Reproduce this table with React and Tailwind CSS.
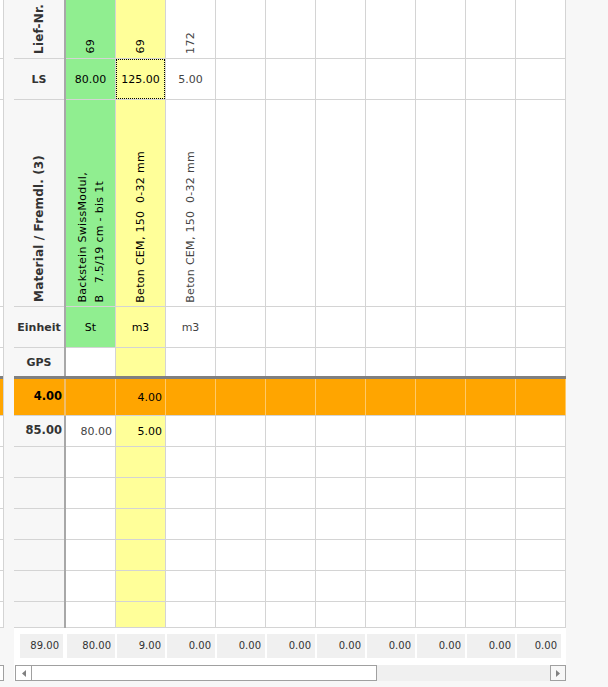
import React from "react";

const HEIGHTS = [
  "h-[59px]",
  "h-[41px]",
  "h-[207px]",
  "h-[41px]",
  "h-[28px]",
  "h-[40px]",
  "h-[31px]",
  "h-[31px]",
  "h-[31px]",
  "h-[31px]",
  "h-[31px]",
  "h-[31px]",
  "h-[26px]",
];

const GREEN = "bg-[#90ee90]";
const YELLOW = "bg-[#ffff99]";
const WHITE = "bg-white";
const ORANGE = "bg-[#ffa500]";

function Vert({ children, cls = "" }) {
  return (
    <span className={`[writing-mode:vertical-rl] rotate-180 whitespace-pre ${cls}`}>
      {children}
    </span>
  );
}

function DCell({ bg = WHITE, children, cls = "", orange = false }) {
  return (
    <div
      className={`relative w-[50px] shrink-0 border-r border-b ${
        orange ? "border-r-[#ffc966] border-b-[#d4d4d4]" : "border-[#d4d4d4]"
      } ${bg} ${cls}`}
    >
      {children}
    </div>
  );
}

function HCell({ children, cls = "", bg = "bg-[#f7f7f7]" }) {
  return (
    <div className={`w-[50px] shrink-0 border-b border-[#d4d4d4] ${bg} ${cls}`}>{children}</div>
  );
}

function Thick({ orange = false }) {
  return <div className={`w-[2px] shrink-0 ${orange ? "bg-[#f0bd6a]" : "bg-[#a8a8a8]"}`} />;
}

function fill(cells, total = 10, bg = WHITE, orange = false) {
  const out = [...cells];
  while (out.length < total) {
    out.push(<DCell key={"f" + out.length} bg={bg} orange={orange} />);
  }
  return out;
}

const dark = "text-black";
const gray = "text-[#444]";
const vcenter = "flex items-center justify-center";
const vbottom = "flex items-end justify-center";
const right = "flex items-center justify-end";
const vlabel = "font-bold text-[#333] text-[12px] tracking-[0.15px]";
const vdata = "tracking-[0.3px]";

export default function App() {
  const rows = [
    // Lief-Nr.
    <div key="r0" className={`flex ${HEIGHTS[0]}`}>
      <HCell cls={`${vbottom} pb-[4px]`}>
        <Vert cls={vlabel}>Lief-Nr.</Vert>
      </HCell>
      <Thick />
      {fill([
        <DCell key="a" bg={GREEN} cls={`${vbottom} pb-[4px] ${dark}`}>
          <Vert cls={vdata}>69</Vert>
        </DCell>,
        <DCell key="b" bg={YELLOW} cls={`${vbottom} pb-[4px] ${dark}`}>
          <Vert cls={vdata}>69</Vert>
        </DCell>,
        <DCell key="c" cls={`${vbottom} pb-[4px] ${gray}`}>
          <Vert cls={vdata}>172</Vert>
        </DCell>,
      ])}
    </div>,
    // LS
    <div key="r1" className={`flex ${HEIGHTS[1]}`}>
      <HCell cls={`${vcenter} font-bold text-[#333]`}>LS</HCell>
      <Thick />
      {fill([
        <DCell key="a" bg={GREEN} cls={`${vcenter} ${dark}`}>
          80.00
        </DCell>,
        <DCell key="b" bg={YELLOW} cls={`${vcenter} ${dark}`}>
          125.00
          <div className="absolute inset-0 border border-dotted border-black" />
        </DCell>,
        <DCell key="c" cls={`${vcenter} ${gray}`}>
          5.00
        </DCell>,
      ])}
    </div>,
    // Material
    <div key="r2" className={`flex ${HEIGHTS[2]}`}>
      <HCell cls={`${vbottom} pb-[4px]`}>
        <Vert cls={vlabel}>Material / Fremdl. (3)</Vert>
      </HCell>
      <Thick />
      {fill([
        <DCell key="a" bg={GREEN} cls={`${vbottom} pb-[3px] ${dark}`}>
          <Vert cls={`leading-[17px] ${vdata}`}>
            {"Backstein SwissModul,\nB   7.5/19 cm - bis 1t"}
          </Vert>
        </DCell>,
        <DCell key="b" bg={YELLOW} cls={`${vbottom} pb-[3px] ${dark}`}>
          <Vert cls={vdata}>{"Beton CEM, 150  0-32 mm"}</Vert>
        </DCell>,
        <DCell key="c" cls={`${vbottom} pb-[3px] ${gray}`}>
          <Vert cls={vdata}>{"Beton CEM, 150  0-32 mm"}</Vert>
        </DCell>,
      ])}
    </div>,
    // Einheit
    <div key="r3" className={`flex ${HEIGHTS[3]}`}>
      <HCell cls={`${vcenter} font-bold text-[#333]`}>Einheit</HCell>
      <Thick />
      {fill([
        <DCell key="a" bg={GREEN} cls={`${vcenter} ${dark}`}>
          St
        </DCell>,
        <DCell key="b" bg={YELLOW} cls={`${vcenter} ${dark}`}>
          m3
        </DCell>,
        <DCell key="c" cls={`${vcenter} ${gray}`}>
          m3
        </DCell>,
      ])}
    </div>,
    // GPS
    <div key="r4" className={`flex ${HEIGHTS[4]}`}>
      <HCell cls={`${vcenter} font-bold text-[#333] border-b-0`}>GPS</HCell>
      <Thick />
      {[0, 1, 2, 3, 4, 5, 6, 7, 8, 9].map((i) => (
        <DCell key={"g" + i} bg={i === 1 ? YELLOW : WHITE} cls="border-b-0" />
      ))}
    </div>,
    // Orange
    <div key="r5" className={`flex ${HEIGHTS[5]} border-t-[3px] border-[#808080]`}>
      <HCell bg={ORANGE} cls={`${right} pr-[2px] font-bold text-black text-[11.5px]`}>
        4.00
      </HCell>
      <Thick orange />
      {fill(
        [
          <DCell key="a" bg={ORANGE} orange />,
          <DCell key="b" bg={ORANGE} orange cls={`${right} pr-[3px] ${dark}`}>
            4.00
          </DCell>,
        ],
        10,
        ORANGE,
        true
      )}
    </div>,
    // 85.00
    <div key="r6" className={`flex ${HEIGHTS[6]}`}>
      <HCell cls={`${right} pr-[2px] font-bold text-[#333] text-[11.5px]`}>85.00</HCell>
      <Thick />
      {fill([
        <DCell key="a" cls={`${right} pr-[3px] ${gray}`}>
          80.00
        </DCell>,
        <DCell key="b" bg={YELLOW} cls={`${right} pr-[3px] ${dark}`}>
          5.00
        </DCell>,
      ])}
    </div>,
  ];

  for (let i = 7; i < HEIGHTS.length; i++) {
    rows.push(
      <div key={"r" + i} className={`flex ${HEIGHTS[i]}`}>
        <HCell />
        <Thick />
        {fill([<DCell key="a" />, <DCell key="b" bg={YELLOW} />])}
      </div>
    );
  }

  const footerVals = ["80.00", "9.00", "0.00", "0.00", "0.00", "0.00", "0.00", "0.00", "0.00", "0.00"];

  return (
    <div className="flex w-[608px] h-[687px] bg-[#f7f7f7] overflow-hidden font-['DejaVu_Sans',sans-serif] text-[11px] leading-none">
      {/* left strip: sliver of neighbouring pane */}
      <div className="w-[4px] shrink-0 flex flex-col">
        {HEIGHTS.map((h, i) => (
          <div key={i} className={`flex ${h}`}>
            <div
              className={`w-[3px] ${
                i === 5
                  ? "bg-[#ffa500] border-t-[3px] border-t-[#808080] border-b border-b-[#d4d4d4]"
                  : i === 4
                  ? "bg-white"
                  : "bg-white border-b border-[#d4d4d4]"
              }`}
            />
            <div className="w-px bg-[#d4d4d4]" />
          </div>
        ))}
        <div className="h-[37px]" />
        <div className="w-[4px] h-[16px] border-y border-r border-[#a0a0a0] bg-white" />
      </div>

      <div className="w-[10px] shrink-0" />

      {/* main pane */}
      <div className="w-[552px] shrink-0 h-[681px] bg-white flex flex-col">
        <div className="flex flex-col">{rows}</div>

        {/* footer totals */}
        <div className="mt-[6px] h-[24px] flex text-[#333] text-[10px]">
          <div className="ml-[6px] w-[43px] bg-[#f0f0f0] flex items-center justify-end pr-[4px]">89.00</div>
          <div className="w-[3px]" />
          {footerVals.map((v, i) => (
            <div key={i} className="w-[50px] shrink-0 px-px flex">
              <div
                className={`${
                  i === 9 ? "w-[44px]" : "w-[48px]"
                } bg-[#f0f0f0] flex items-center justify-end pr-[4px]`}
              >
                {v}
              </div>
            </div>
          ))}
        </div>

        {/* horizontal scrollbar */}
        <div className="mt-[7px] h-[16px] flex pl-px">
          <div className="w-[17px] h-[16px] border border-[#a0a0a0] bg-white flex items-center justify-center">
            <svg width="4" height="7" viewBox="0 0 4 7">
              <polygon points="4,0 4,7 0,3.5" fill="#808080" />
            </svg>
          </div>
          <div className="w-[345px] h-[16px] border-y border-r border-[#a0a0a0] bg-white" />
          <div className="flex-1 h-[16px] bg-[#f0f0f0]" />
          <div className="w-[16px] h-[16px] border border-[#a0a0a0] bg-[#f7f7f7] flex items-center justify-center">
            <svg width="4" height="7" viewBox="0 0 4 7">
              <polygon points="0,0 4,3.5 0,7" fill="#808080" />
            </svg>
          </div>
        </div>
      </div>
    </div>
  );
}
